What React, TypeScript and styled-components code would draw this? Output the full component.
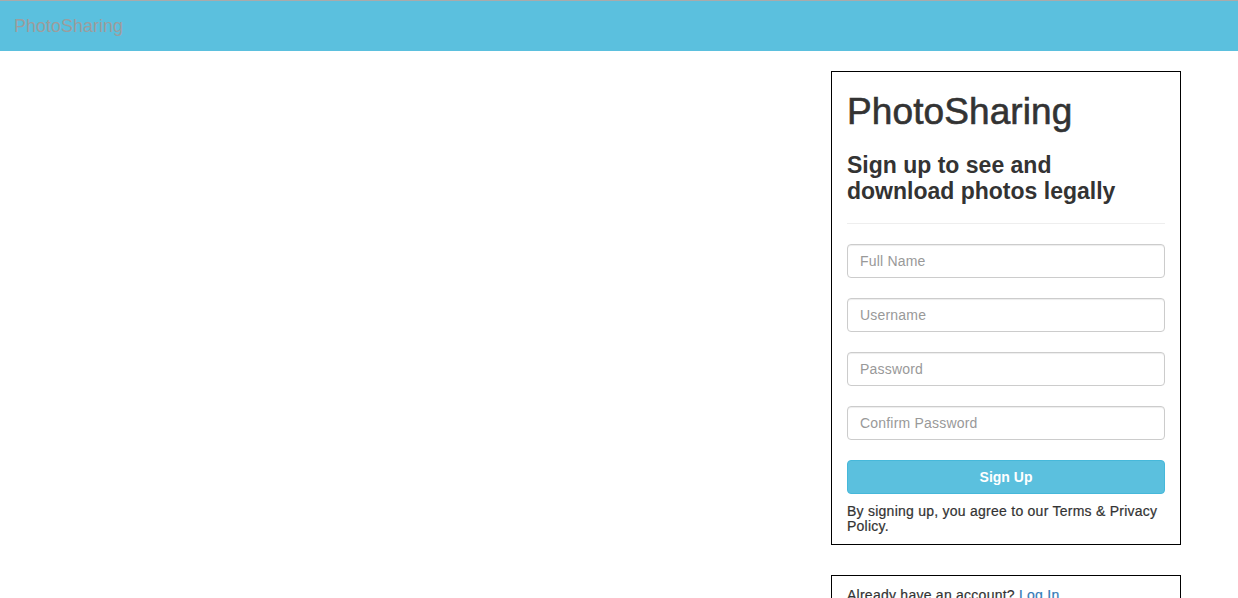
import React from "react";
import styled, { createGlobalStyle } from "styled-components";

const GlobalStyle = createGlobalStyle`
  html, body {
    margin: 0;
    padding: 0;
    background: #fff;
    color: #333;
    font-family: "Liberation Sans", Arial, Helvetica, sans-serif;
    font-size: 14px;
    line-height: 1.42857;
  }
  * {
    box-sizing: border-box;
  }
`;

const fields = ["Full Name", "Username", "Password", "Confirm Password"];

const App = () => {
  return (
    <>
      <GlobalStyle />
      <Navbar>
        <Brand href="#">PhotoSharing</Brand>
      </Navbar>
      <Main>
        <Column>
          <Card>
            <Title>PhotoSharing</Title>
            <Subtitle>Sign up to see and download photos legally</Subtitle>
            <Divider />
            <Form onSubmit={(e) => e.preventDefault()}>
              {fields.map((f) => (
                <Input
                  key={f}
                  type={f.includes("Password") ? "password" : "text"}
                  placeholder={f}
                />
              ))}
              <SubmitBtn type="submit">Sign Up</SubmitBtn>
            </Form>
            <Terms>By signing up, you agree to our Terms &amp; Privacy Policy.</Terms>
          </Card>
          <LoginCard>
            Already have an account? <LoginLink href="#">Log In</LoginLink>
          </LoginCard>
        </Column>
      </Main>
    </>
  );
};

export default App;

const Navbar = styled.nav`
  display: flex;
  align-items: center;
  height: 51px;
  background: #5bc0de;
  border-top: 1px solid #aaa;
`;
const Brand = styled.a`
  display: block;
  padding: 15px 14px;
  font-size: 18px;
  line-height: 20px;
  color: #9d9d9d;
  text-decoration: none;
`;
const Main = styled.main`
  display: flex;
  justify-content: flex-end;
  padding: 20px 57px 0 0;
`;
const Column = styled.div`
  display: flex;
  flex-direction: column;
  gap: 30px;
  width: 350px;
`;
const Card = styled.section`
  border: 1px solid #000;
  padding: 0 15px 10px;
`;
const Title = styled.h1`
  margin: 20px 0 10px;
  font-size: 37px;
  font-weight: 500;
  line-height: 40px;
  -webkit-text-stroke: 0.6px #333;
  letter-spacing: 0.1px;
`;
const Subtitle = styled.h3`
  margin: 20px 0 10px;
  font-size: 23px;
  font-weight: 700;
  line-height: 26px;
`;
const Divider = styled.hr`
  margin: 19px 0 20px;
  border: 0;
  border-top: 1px solid #eee;
`;
const Form = styled.form`
  display: flex;
  flex-direction: column;
  gap: 20px;
`;
const Input = styled.input`
  display: block;
  width: 100%;
  height: 34px;
  padding: 6px 12px;
  font-family: inherit;
  font-size: 14px;
  letter-spacing: 0.2px;
  color: #555;
  background: #fff;
  border: 1px solid #ccc;
  border-radius: 4px;
  box-shadow: inset 0 1px 1px rgba(0, 0, 0, 0.075);
  outline: none;
  &::placeholder {
    color: #999;
  }
`;
const SubmitBtn = styled.button`
  display: block;
  width: 100%;
  height: 34px;
  padding: 6px 12px;
  font-family: inherit;
  font-size: 14px;
  font-weight: 700;
  color: #fff;
  background: #5bc0de;
  border: 1px solid #46b8da;
  border-radius: 4px;
  cursor: pointer;
`;
const Terms = styled.p`
  margin: 10px 0 0;
  font-size: 14px;
  line-height: 15px;
  letter-spacing: 0.25px;
  -webkit-text-stroke: 0.2px #333;
`;
const LoginCard = styled.section`
  border: 1px solid #000;
  padding: 10px 15px;
  font-size: 14px;
  letter-spacing: 0.25px;
  -webkit-text-stroke: 0.2px #333;
`;
const LoginLink = styled.a`
  color: #337ab7;
  -webkit-text-stroke: 0.2px #337ab7;
  text-decoration: none;
`;
